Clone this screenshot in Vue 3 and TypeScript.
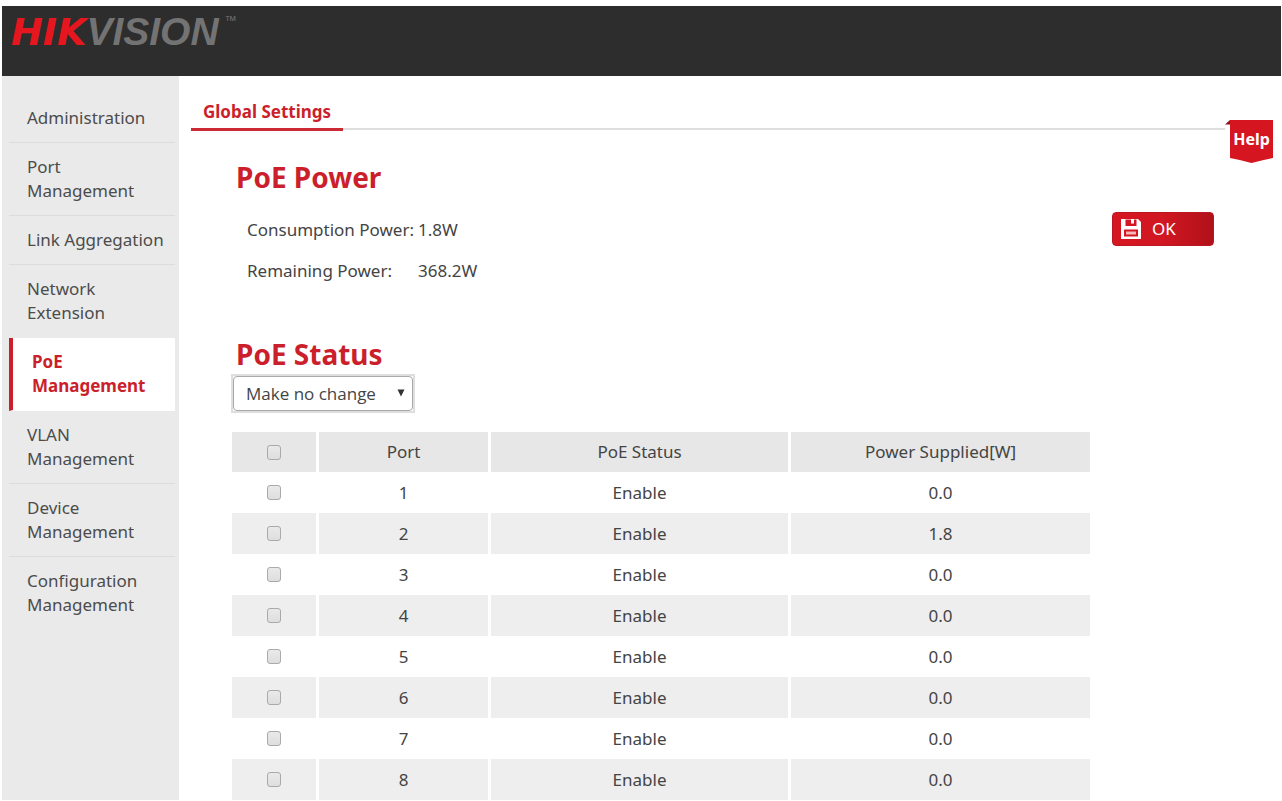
<script setup lang="ts">
import { computed, ref } from 'vue'

interface PortRow {
  port: number
  status: string
  power: string
  selected: boolean
}

const menu: string[][] = [
  ['Administration'],
  ['Port', 'Management'],
  ['Link Aggregation'],
  ['Network', 'Extension'],
  ['PoE', 'Management'],
  ['VLAN', 'Management'],
  ['Device', 'Management'],
  ['Configuration', 'Management'],
]
const activeItem = ref(4)
const statusChange = ref('none')

const rows = ref<PortRow[]>(
  Array.from({ length: 8 }, (_, i) => ({
    port: i + 1,
    status: 'Enable',
    power: i === 1 ? '1.8' : '0.0',
    selected: false,
  })),
)

const allSelected = computed({
  get: () => rows.value.every((row) => row.selected),
  set: (value: boolean) => rows.value.forEach((row) => (row.selected = value)),
})
</script>

<template>
  <div class="page">
    <header class="topbar">
      <div class="logo"><span class="logo-red">HIK</span><span class="logo-grey">VISION</span><span class="tm">™</span></div>
    </header>
    <div class="body">
      <nav class="sidebar" aria-label="Main menu">
        <a
          v-for="(lines, i) in menu"
          :key="i"
          href="#"
          class="item"
          :class="{ active: i === activeItem, plain: i === activeItem - 1 || i === menu.length - 1 }"
          @click.prevent="activeItem = i"
        >
          <span v-for="line in lines" :key="line">{{ line }}</span>
        </a>
      </nav>
      <main class="content">
        <div class="tabs">
          <a href="#" class="tab" @click.prevent>Global Settings</a>
          <div class="rule"></div>
          <a href="#" class="help" @click.prevent>
            <svg width="50" height="44" viewBox="0 0 50 44" aria-hidden="true">
              <path d="M0 4.500L5 0v4.500z" fill="#8d1219" />
              <path d="M5 0h43v38Q37 40 26.500 43Q16 40 5 38z" fill="#d5151f" />
            </svg>
            <span>Help</span>
          </a>
        </div>
        <section class="power">
          <div>
            <h2>PoE Power</h2>
            <dl>
              <dt>Consumption Power:</dt>
              <dd>1.8W</dd>
              <dt>Remaining Power:</dt>
              <dd>368.2W</dd>
            </dl>
          </div>
          <button type="button" class="ok">
            <svg width="20" height="20" viewBox="0 0 20 20" aria-hidden="true">
              <path
                fill="#fff"
                fill-rule="evenodd"
                d="M0 0h17l3 3v17H0zM4.500 0.500v6.500h11V0.500h-2.500v4H10V0.500zM3 10.500v7h14v-7z"
              />
              <path fill="#f6b9bb" d="M5 12.500h10v3H5z" />
            </svg>
            <span>OK</span>
          </button>
        </section>
        <section class="status">
          <h2>PoE Status</h2>
          <div class="select-box">
            <select v-model="statusChange" aria-label="PoE status">
              <option value="none">Make no change</option>
              <option value="enable">Enable</option>
              <option value="disable">Disable</option>
            </select>
            <svg width="8" height="8" viewBox="0 0 8 8" aria-hidden="true">
              <path d="M0.500 0.500h7L4 7.500z" fill="#333" />
            </svg>
          </div>
          <table>
            <colgroup>
              <col class="c-check" />
              <col class="c-port" />
              <col class="c-wide" />
              <col class="c-wide" />
            </colgroup>
            <thead>
              <tr>
                <th><input v-model="allSelected" type="checkbox" aria-label="Select all ports" /></th>
                <th>Port</th>
                <th>PoE Status</th>
                <th>Power Supplied[W]</th>
              </tr>
            </thead>
            <tbody>
              <tr v-for="row in rows" :key="row.port">
                <td><input v-model="row.selected" type="checkbox" :aria-label="`Select port ${row.port}`" /></td>
                <td>{{ row.port }}</td>
                <td>{{ row.status }}</td>
                <td>{{ row.power }}</td>
              </tr>
            </tbody>
          </table>
        </section>
      </main>
    </div>
  </div>
</template>

<style>
body {
  margin: 0;
  background: #fff;
}
</style>

<style scoped>
.page {
  box-sizing: border-box;
  min-height: 100vh;
  padding: 6px 1px 1px 2px;
  display: flex;
  flex-direction: column;
  font-family: 'Noto Sans', 'Open Sans', sans-serif;
  font-size: 17px;
  line-height: 24px;
  color: #444;
}
.topbar {
  height: 70px;
  background: #2d2d2d;
}
.logo {
  display: flex;
  align-items: flex-start;
  padding: 4px 0 0 9px;
  font-style: italic;
  font-size: 38px;
  line-height: 44px;
}
.logo-red {
  font-family: 'DejaVu Sans', sans-serif;
  font-weight: 700;
  color: #e6161f;
}
.logo-grey {
  font-family: 'Liberation Sans', sans-serif;
  font-size: 39px;
  font-weight: 700;
  color: #737373;
}
.tm {
  padding: 3px 0 0 7px;
  font-size: 14px;
  line-height: 16px;
  font-style: normal;
  color: #666;
}
.body {
  flex: 1;
  display: flex;
}
.sidebar {
  box-sizing: border-box;
  flex: none;
  width: 177px;
  padding: 18px 4px 0 7px;
  background: #eaeaea;
}
.item {
  display: flex;
  flex-direction: column;
  padding: 12px 0 12px 18px;
  border-bottom: 1px solid #dcdcdc;
  color: #4c4c4c;
  text-decoration: none;
  white-space: nowrap;
}
.item.plain {
  border-bottom-color: transparent;
}
.item.active {
  padding-left: 19px;
  border-left: 4px solid #cb1f2b;
  border-bottom-color: #fff;
  background: #fff;
  color: #cb1f2b;
  font-weight: 700;
}
.content {
  flex: 1;
  min-width: 0;
  padding: 22px 6px 0 12px;
}
.tabs {
  display: flex;
  align-items: flex-start;
}
.tab {
  padding: 2px 12px 4px;
  border-bottom: 3px solid #cb2a35;
  color: #cb1f2b;
  font-weight: 700;
  text-decoration: none;
  white-space: nowrap;
}
.rule {
  flex: 1;
  margin-top: 30px;
  height: 2px;
  background: #dedede;
}
.help {
  position: relative;
  height: 33px;
  margin-top: 22px;
  margin-bottom: -22px;
  width: 50px;
  color: #fff;
  font-size: 16px;
  font-weight: 700;
  text-decoration: none;
}
.help svg {
  display: block;
}
.help span {
  position: absolute;
  left: 5px;
  top: 7px;
  width: 43px;
  text-align: center;
}
h2 {
  margin: 0;
  color: #cb1f2b;
  font-size: 28px;
  line-height: 36px;
  font-weight: 700;
}
.power {
  display: flex;
  justify-content: space-between;
  padding: 28px 61px 0 45px;
}
dl {
  display: grid;
  grid-template-columns: 171px auto;
  row-gap: 17px;
  margin: 23px 0 0 11px;
}
dt {
  white-space: nowrap;
}
dd {
  margin: 0;
}
.ok {
  display: flex;
  align-items: center;
  gap: 11px;
  box-sizing: border-box;
  width: 102px;
  height: 34px;
  margin-top: 53px;
  padding: 0 0 0 8px;
  border: 1px solid #b91721;
  border-radius: 4px;
  background: linear-gradient(90deg, #d61722, #d01722 50%, #b01119);
  color: #fff;
  font: inherit;
}
.status {
  padding: 53px 185px 0 41px;
}
.status h2 {
  padding-left: 4px;
}
.select-box {
  position: relative;
  box-sizing: border-box;
  width: 184px;
  margin: 2px 0 0 -1px;
  border: 2px solid #dedede;
}
.select-box select {
  display: block;
  appearance: none;
  box-sizing: border-box;
  width: 100%;
  height: 35px;
  padding: 0 24px 0 12px;
  border: 1px solid #a9a9a9;
  border-radius: 4px;
  background: #fff;
  color: #444;
  font: inherit;
  font-family: 'Open Sans', 'Noto Sans', sans-serif;
}
.select-box svg {
  position: absolute;
  right: 8px;
  top: 13px;
  pointer-events: none;
}
table {
  width: 100%;
  margin-top: 19px;
  border-collapse: collapse;
  table-layout: fixed;
}
.c-check {
  width: 10%;
}
.c-port {
  width: 20%;
}
.c-wide {
  width: 35%;
}
th,
td {
  height: 41px;
  padding: 0;
  border-left: 3px solid #fff;
  text-align: center;
  font-weight: 400;
}
th:first-child,
td:first-child {
  border-left: 0;
}
th {
  height: 40px;
  background: #e7e7e7;
}
tbody tr:nth-child(even) td {
  background: #eee;
}
input[type='checkbox'] {
  display: block;
  appearance: none;
  box-sizing: border-box;
  width: 14px;
  height: 15px;
  margin: 0 auto;
  border: 1px solid #aaa;
  border-radius: 3px;
  background: linear-gradient(#e9e9e9, #dedede);
}
input[type='checkbox']:checked {
  background: #888;
}
</style>
